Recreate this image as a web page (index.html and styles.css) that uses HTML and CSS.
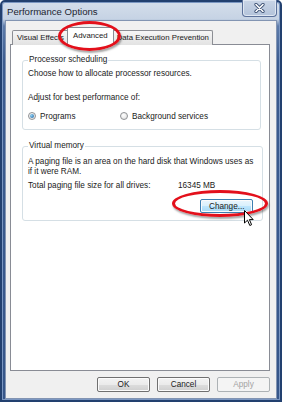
FILE: index.html
```html
<!DOCTYPE html>
<html lang="en">
<head>
    <meta charset="UTF-8">
    <meta name="viewport" content="width=device-width, initial-scale=1.0">
    <title>Performance Options</title>
    <link rel="stylesheet" href="styles.css">
</head>
<body>
    <div class="window">
        <div class="titlebar">
            <span class="title">Performance Options</span>
            <div class="close">
                <svg width="11" height="10" viewBox="0 0 11 10">
                    <path d="M2 1.5 L9 8.5 M9 1.5 L2 8.5" stroke="#3a4f72" stroke-width="3.2" stroke-linecap="round"/>
                    <path d="M2 1.5 L9 8.5 M9 1.5 L2 8.5" stroke="#ffffff" stroke-width="1.6" stroke-linecap="round"/>
                </svg>
            </div>
        </div>

        <div class="client">
            <div class="tabs">
                <div class="tab tab-first">Visual Effects</div>
                <div class="tab active">Advanced</div>
                <div class="tab tab-last">Data Execution Prevention</div>
            </div>

            <div class="panel">
                <fieldset class="group group-cpu">
                    <legend>Processor scheduling</legend>
                    <p class="line first">Choose how to allocate processor resources.</p>
                    <p class="line adjust">Adjust for best performance of:</p>
                    <div class="radios">
                        <label class="radio-item radio-wide"><span class="radio checked"></span>Programs</label>
                        <label class="radio-item"><span class="radio"></span>Background services</label>
                    </div>
                </fieldset>

                <fieldset class="group group-vm">
                    <legend>Virtual memory</legend>
                    <p class="line first">A paging file is an area on the hard disk that Windows uses as<br>if it were RAM.</p>
                    <div class="total">
                        <span class="total-label">Total paging file size for all drives:</span>
                        <span>16345 MB</span>
                    </div>
                    <div class="change-row">
                        <button class="btn btn-hover">Change...</button>
                    </div>
                </fieldset>
            </div>

            <div class="actions">
                <button class="btn">OK</button>
                <button class="btn">Cancel</button>
                <button class="btn" disabled>Apply</button>
            </div>
        </div>

        <!-- annotations drawn over the dialog -->
        <div class="mark mark-tab"></div>
        <div class="mark mark-change"></div>
        <svg class="cursor" width="10" height="17" viewBox="0 0 10 17">
            <path d="M0.5 0.5 L0.5 13 L3.5 10.2 L5.8 15.5 L7.6 14.7 L5.4 9.6 L9.2 9.6 Z" fill="#ffffff" stroke="#000000" stroke-width="1"/>
        </svg>
    </div>
</body>
</html>
```

FILE: styles.css
```css
body {
    margin: 0;
    background: #ffffff;
    font-family: "Liberation Sans", Arial, sans-serif;
    font-size: 8.2px;
    color: #1a1a1a;
}

.window {
    position: relative;
    box-sizing: border-box;
    width: 282px;
    height: 402px;
    border: 2px solid #22406f;
    border-radius: 5px 5px 0 0;
    padding: 0 4px 2px 4px;
    background: linear-gradient(#d4deeb 0, #c6d3e4 17px, #5d7cab 24px, #3b5b8f 60px, #36568a 100%);
    box-shadow: inset 0 0 0 1px #7b97c2;
    display: flex;
    flex-direction: column;
}

.titlebar {
    height: 19px;
    display: flex;
    justify-content: space-between;
    align-items: flex-start;
}

.title {
    font-size: 9.6px;
    color: #1c2430;
    margin: 4px 0 0 1px;
}

.close {
    width: 35px;
    height: 17px;
    margin: -2px -1px 0 0;
    box-sizing: border-box;
    border: 1px solid #5b719a;
    border-top: none;
    border-radius: 0 0 4px 4px;
    background: linear-gradient(#c9d5e6, #b3c3da);
    box-shadow: inset 0 0 0 1px #dfe7f2;
    display: flex;
    align-items: center;
    justify-content: center;
}

.client {
    flex: 1;
    background: #f0f0f0;
    box-shadow: 0 0 0 1px #8294b2;
    display: flex;
    flex-direction: column;
    padding: 6px 6px 6px 4px;
}

.tabs {
    display: flex;
    align-items: flex-end;
    height: 17px;
    padding-left: 2px;
    position: relative;
    z-index: 1;
    font-size: 7.8px;
}

.tab {
    box-sizing: border-box;
    height: 15px;
    padding: 0 4px;
    line-height: 13px;
    white-space: nowrap;
    border: 1px solid #8c8e94;
    border-bottom: none;
    border-radius: 2px 2px 0 0;
    background: linear-gradient(#f6f6f6, #e2e2e2);
    margin-bottom: -1px;
}

.tab-first {
    margin-right: -2px;
}

.tab-last {
    margin-left: -2px;
    padding: 0 3px 0 4px;
}

.tab.active {
    position: relative;
    z-index: 2;
    height: 18px;
    padding: 0 5px;
    line-height: 15px;
    background: #ffffff;
    border-color: #898c95;
}

.panel {
    flex: 1;
    background: #ffffff;
    border: 1px solid #898c95;
    padding-top: 10px;
}

.group {
    margin: 0 8px 11px 11px;
    padding: 0 9px 8px 5px;
    border: 1px solid #d5dfe5;
    border-radius: 3px;
}

.group legend {
    padding: 0 1px;
    line-height: 10px;
    color: #1a1a1a;
}

.line {
    margin: 0;
    line-height: 10px;
    white-space: nowrap;
}

.group-cpu .first {
    margin-top: 4px;
}

.adjust {
    margin-top: 14px;
}

.radios {
    display: flex;
    margin-top: 8px;
    height: 10px;
    align-items: center;
}

.radio-item {
    display: flex;
    align-items: center;
}

.radio-wide {
    width: 92px;
}

.radio {
    box-sizing: border-box;
    width: 8px;
    height: 8px;
    margin-right: 4px;
    border: 1px solid #8f9295;
    border-radius: 50%;
    background: radial-gradient(circle at 40% 35%, #ffffff, #dcdcdc);
    display: flex;
    align-items: center;
    justify-content: center;
}

.radio.checked::after {
    content: "";
    width: 4px;
    height: 4px;
    border-radius: 50%;
    background: radial-gradient(circle at 35% 35%, #8fd0f3, #1a5f9e);
}

.group-vm {
    padding-bottom: 7px;
}

.group-vm .first {
    margin-top: 6px;
}

.total {
    display: flex;
    margin-top: 4px;
    line-height: 10px;
}

.total-label {
    width: 150px;
}

.change-row {
    display: flex;
    justify-content: flex-end;
    margin-top: 8px;
}

.btn {
    box-sizing: border-box;
    width: 53px;
    height: 15px;
    padding: 0;
    font-family: inherit;
    font-size: 8.2px;
    color: #1a1a1a;
    border: 1px solid #707070;
    border-radius: 2px;
    background: linear-gradient(#f3f3f3 0, #ebebeb 50%, #dddddd 51%, #cfcfcf 100%);
    box-shadow: inset 0 0 0 1px #fbfbfb;
}

.btn-hover {
    height: 14px;
    border-color: #3c7fb1;
    background: linear-gradient(#eaf6fd 0, #d9f0fc 50%, #bee6fd 51%, #a7d9f5 100%);
}

.btn:disabled {
    color: #a3a3a3;
    border-color: #adb2b5;
    background: #f4f4f4;
    box-shadow: none;
}

.actions {
    display: flex;
    justify-content: flex-end;
    gap: 7px;
    padding-top: 6px;
    height: 15px;
}

.mark {
    position: absolute;
    box-sizing: border-box;
    border: 3px solid #e3101b;
    border-radius: 50%;
    box-shadow: 1px 2px 2px rgba(0, 0, 0, 0.35);
    z-index: 5;
}

.mark-tab {
    left: 56px;
    top: 19px;
    width: 63px;
    height: 30px;
}

.mark-change {
    left: 170px;
    top: 188px;
    width: 96px;
    height: 27px;
}

.cursor {
    position: absolute;
    left: 242px;
    top: 208px;
    z-index: 6;
}
```
